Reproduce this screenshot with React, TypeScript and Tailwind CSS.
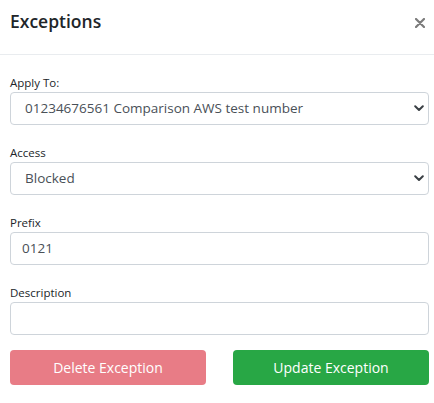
import React from "react";

const font = { fontFamily: '"Open Sans", "Noto Sans", sans-serif' };

function Chevron() {
  return (
    <svg width="10" height="7" viewBox="0 0 10 7" className="shrink-0">
      <polyline points="1.2,1.3 5,5 8.8,1.3" fill="none" stroke="#3a3f44" strokeWidth="2" strokeLinecap="round" strokeLinejoin="round" />
    </svg>
  );
}

function Label({ children }: { children: React.ReactNode }) {
  return <div className="h-[19px] leading-[19px] text-[11.5px] text-[#212529]">{children}</div>;
}

function SelectBox({ value }: { value: string }) {
  return (
    <div className="h-[33px] border border-[#ced4da] rounded-[4px] bg-white flex items-center pl-3.5 pr-1">
      <span className="flex-1 text-[13.5px] text-[#495057] whitespace-nowrap">{value}</span>
      <Chevron />
    </div>
  );
}

function InputBox({ value }: { value: string }) {
  return (
    <div className="h-[33px] border border-[#ced4da] rounded-[4px] bg-white flex items-center pl-[11px]">
      <span className="text-[13.5px] text-[#495057]">{value}</span>
    </div>
  );
}

export default function App() {
  return (
    <div className="w-[434px] h-[403px] bg-white" style={font}>
      <div className="h-[55px] border-b border-[#e9ecef] flex items-center justify-between pl-[10px] pr-[9px]">
        <h5 className="text-[17.5px] font-semibold text-[#212529] leading-none -mt-[10px]">Exceptions</h5>
        <svg width="10" height="10" viewBox="0 0 10 10" className="-mt-[8px]">
          <path d="M1 1L9 9M9 1L1 9" stroke="#7b7b7b" strokeWidth="2.2" strokeLinecap="round" />
        </svg>
      </div>
      <div className="pl-[10px] pr-[5px] pt-[18px]">
        <div className="mb-[18px]">
          <Label>Apply To:</Label>
          <SelectBox value="01234676561 Comparison AWS test number" />
        </div>
        <div className="mb-[18px]">
          <Label>Access</Label>
          <SelectBox value="Blocked" />
        </div>
        <div className="mb-[18px]">
          <Label>Prefix</Label>
          <InputBox value="0121" />
        </div>
        <div className="mb-[15px]">
          <Label>Description</Label>
          <InputBox value="" />
        </div>
        <div className="flex justify-between">
          <button className="w-[196px] h-[35px] rounded-[4px] bg-[#e87c86] text-white text-[14px]">Delete Exception</button>
          <button className="w-[196px] h-[35px] rounded-[4px] bg-[#28a745] text-white text-[14px]">Update Exception</button>
        </div>
      </div>
    </div>
  );
}
